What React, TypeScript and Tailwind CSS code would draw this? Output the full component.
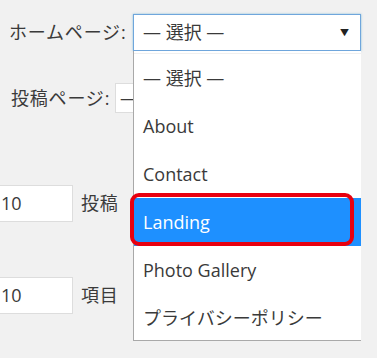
const OPTIONS = ["— 選択 —", "About", "Contact", "Landing", "Photo Gallery", "プライバシーポリシー"];

export default function App() {
  return (
    <div
      className="relative w-[377px] h-[358px] overflow-hidden bg-[#f1f1f1] text-[#3a3a3a] text-[18px]"
      style={{ fontFamily: '"Open Sans", "Noto Sans CJK JP", sans-serif' }}
    >
      {/* ホームページ */}
      <div className="flex items-center pt-[14px] pl-[9px]">
        <span className="w-[124px] leading-[37px] tracking-[0.8px]">ホームページ:</span>
        <div className="flex items-center justify-between w-[228px] h-[37px] bg-white border border-[#6fa6dc] shadow-[0_0_2px_rgba(30,140,190,0.5)] pl-[9px] pr-[11px]">
          <span>— 選択 —</span>
          <span className="text-[9px] text-[#222]">▼</span>
        </div>
      </div>

      {/* 投稿ページ */}
      <div className="flex items-center mt-[32px] pl-[11px]">
        <span className="w-[104px] leading-[30px] tracking-[0.8px]">投稿ページ:</span>
        <div className="w-[120px] h-[30px] bg-white border border-[#ddd] pl-[4px] leading-[28px]">—</div>
      </div>

      {/* 表示件数 */}
      <div className="flex items-center mt-[72px] ml-[-12px] gap-[8px]">
        <div className="w-[85px] h-[37px] bg-white border border-[#ddd] pl-[12px] leading-[35px]">10</div>
        <span className="tracking-[0.8px]">投稿</span>
      </div>
      <div className="flex items-center mt-[55px] ml-[-12px] gap-[8px]">
        <div className="w-[85px] h-[37px] bg-white border border-[#ddd] pl-[12px] leading-[35px]">10</div>
        <span className="tracking-[0.8px]">項目</span>
      </div>

      {/* dropdown list */}
      <div className="absolute left-[133px] top-[51px] w-[228px] h-[290px] bg-white border-l border-b border-[#a9a9a9] pt-[2px]">
        <div className="border-t border-[#f0f0f0]" />
        {OPTIONS.map((o) => (
          <div
            key={o}
            className={`h-[48px] pl-[9px] flex items-center ${o === "Landing" ? "bg-[#1e90ff] text-white" : ""}`}
          >
            {o}
          </div>
        ))}
        <div className="absolute left-[-4px] top-[142px] w-[224px] h-[53px] border-[4px] border-[#e8000f] rounded-[9px]" />
      </div>
    </div>
  );
}
